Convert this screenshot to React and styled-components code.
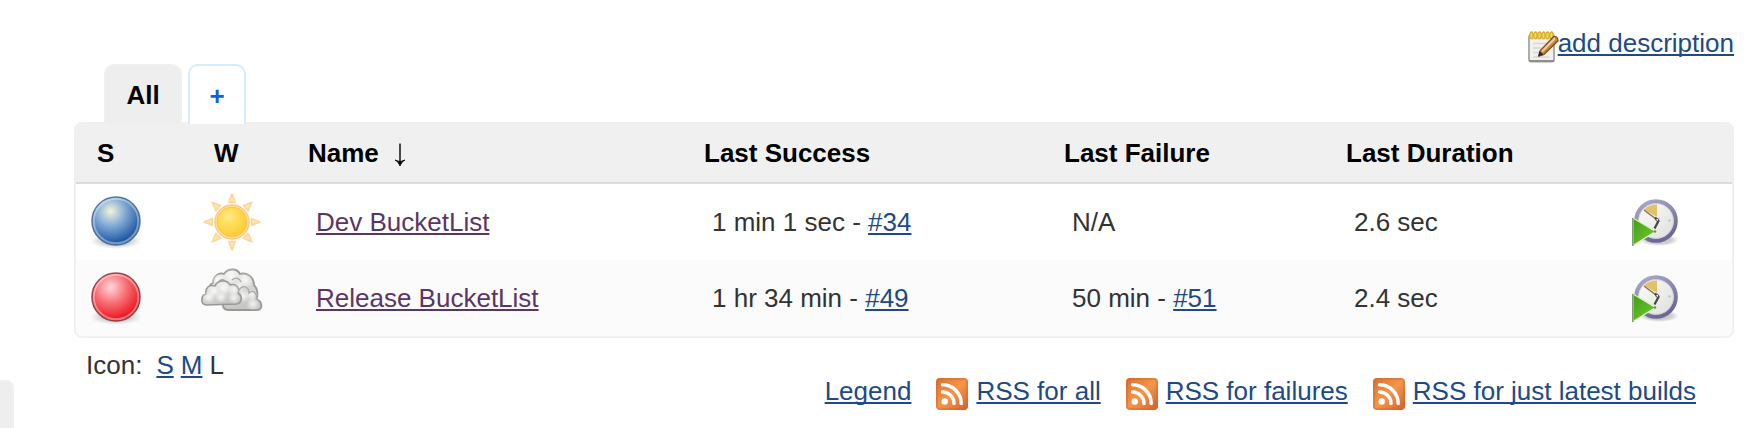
import React from 'react';
import styled, { createGlobalStyle } from 'styled-components';

const GlobalStyle = createGlobalStyle`
  *, *::before, *::after { box-sizing: border-box; }
  body {
    margin: 0;
    background: #fff;
    color: #333;
    font: 26px/30px "Liberation Sans", Helvetica, Arial, sans-serif;
    overflow: hidden;
  }
  svg { display: block; flex: none; }
`;

const Page = styled.div`
  display: flex;
  height: 428px;
  background: #fff;
`;

const SidePanel = styled.aside`
  width: 14px;
  height: 60px;
  margin-top: 380px;
  flex: none;
  background: #eee;
  border: 2px solid #f0f0f0;
  border-left: 0;
  border-top-right-radius: 8px;
`;

const Main = styled.main`
  flex: 1;
  display: flex;
  flex-direction: column;
  padding: 28px 20px 0 60px;
`;

const Link = styled.a`
  color: ${(p) => (p.$visited ? '#5c3566' : '#204a87')};
  text-decoration: underline;
  text-decoration-thickness: 2px;
  text-underline-offset: 2px;
  text-decoration-skip-ink: none;
  white-space: nowrap;
`;

const Description = styled.div`
  display: flex;
  justify-content: flex-end;
  height: 36px;
`;

const DescriptionIcon = styled.span`
  padding-top: 3px;
  margin-right: -1px;
`;

const TabBar = styled.nav`
  display: flex;
  gap: 6px;
  height: 58px;
  padding-left: 30px;
`;

const Tab = styled.div`
  width: ${(p) => (p.$active ? 78 : 58)}px;
  height: 60px;
  position: relative;
  z-index: 1;
  padding-top: ${(p) => (p.$active ? 14 : 15)}px;
  text-align: center;
  font-weight: bold;
  color: ${(p) => (p.$active ? '#000' : '#1161d6')};
  background: ${(p) => (p.$active ? '#eee' : '#fff')};
  border: 2px solid ${(p) => (p.$active ? '#f0f0f0' : '#d5ecff')};
  border-bottom: 0;
  border-radius: 10px 10px 0 0;
`;

const Jobs = styled.section`
  height: 216px;
  border: 2px solid #f0f0f0;
  border-radius: 8px;
  overflow: hidden;
`;

const Row = styled.div`
  display: grid;
  grid-template-columns: 116px 116px 396px 360px 282px 279px 1fr;
  align-items: center;
  height: 76px;
  background: ${(p) => (p.$alt ? '#fbfbfb' : '#fff')};
`;

const HeadRow = styled(Row)`
  height: 60px;
  background: #f0f0f0;
  border-bottom: 2px solid #dcdcdc;
  color: #000;
  font-weight: bold;
`;

const HeadCell = styled.div`
  display: flex;
  gap: 15px;
  padding-left: ${(p) => p.$inset ?? 0}px;
  white-space: nowrap;
`;

const Cell = styled.div`
  padding-left: ${(p) => p.$inset ?? 8}px;
  white-space: pre;
`;

const Footer = styled.footer`
  display: flex;
  justify-content: space-between;
  padding: 12px 38px 0 12px;
`;

const IconSizes = styled.div`
  display: flex;
  gap: 7px;
`;

const SizeLabel = styled.span`
  margin-right: 7px;
`;

const Feeds = styled.div`
  display: flex;
  gap: 25px;
  padding-top: 26px;
`;

const Feed = styled.div`
  display: flex;
  gap: 8px;
`;

const FeedIcon = styled.span`
  padding-top: 2px;
`;

function Ball({ id, light, mid, dark, rim }) {
  return (
    <svg width="52" height="56" viewBox="0 0 52 56">
      <defs>
        <radialGradient id={id} cx="39%" cy="30%" r="65%">
          <stop offset="0" stopColor={light} />
          <stop offset=".5" stopColor={mid} />
          <stop offset="1" stopColor={dark} />
        </radialGradient>
        <radialGradient id={id + 'Shade'}>
          <stop offset=".5" stopColor="#aaa" stopOpacity=".6" />
          <stop offset="1" stopColor="#bbb" stopOpacity="0" />
        </radialGradient>
      </defs>
      <ellipse cx="26" cy="47" rx="26" ry="8" fill={`url(#${id}Shade)`} />
      <circle cx="26" cy="27" r="24" fill={`url(#${id})`} stroke={rim} strokeOpacity=".85" strokeWidth="1.6" />
      <circle cx="26" cy="27" r="22.3" fill="none" stroke="#fff" strokeOpacity=".38" strokeWidth="2" />
    </svg>
  );
}

function Sun() {
  return (
    <svg width="60" height="60" viewBox="0 0 60 60">
      <defs>
        <radialGradient id="sunCore" cx="38%" cy="32%" r="70%">
          <stop offset="0" stopColor="#ffe98c" />
          <stop offset=".45" stopColor="#ffdc55" />
          <stop offset="1" stopColor="#fccb35" />
        </radialGradient>
      </defs>
      {[0, 45, 90, 135, 180, 225, 270, 315].map((a) => (
        <path key={a} d="M26.6 10.5 L30 2 L33.4 10.5 Z" transform={`rotate(${a} 30 30)`}
          fill="#ffe6a4" stroke="#fbd7a0" strokeWidth="1.6" strokeLinejoin="round" />
      ))}
      <circle cx="30" cy="30" r="17" fill="#ffe48c" stroke="#fbcb84" strokeWidth="1.5" />
      <circle cx="30" cy="30" r="14.7" fill="url(#sunCore)" stroke="#fbc45a" strokeWidth="1.1" />
    </svg>
  );
}

const BACK_CLOUD = 'M10 27 C7 22 8 16 12 15 C12 8 18 4 23 6 C27 0 36 0 39 6 C46 4 53 9 53 17 C57 21 57 28 55.5 31 C62 34 62 42 56 42 L28 42 C22 42 21 38 23 34 Z';
const FRONT_CLOUD = 'M5 37 C-1 36 0 27 5 26 C4 20 8 16 14 18 C16 12 26 11 29 17 C35 15 39 20 37 25 C42 28 41 35 36 36 Z';

function Clouds() {
  return (
    <svg width="62" height="46" viewBox="0 0 62 46">
      <defs>
        <linearGradient id="cloudFill" x1="0" y1="0" x2=".4" y2="1">
          <stop offset="0" stopColor="#f2f2f0" />
          <stop offset="1" stopColor="#c6c6c3" />
        </linearGradient>
        <radialGradient id="puff">
          <stop offset="0" stopColor="#fff" stopOpacity=".8" />
          <stop offset="1" stopColor="#fff" stopOpacity="0" />
        </radialGradient>
      </defs>
      <path d={BACK_CLOUD} fill="url(#cloudFill)" stroke="#989894" strokeWidth="1.8" />
      <g fill="url(#puff)">
        <circle cx="17" cy="12" r="7" /><circle cx="30" cy="8" r="8" />
        <circle cx="44" cy="12" r="8" /><circle cx="37" cy="19" r="6" />
        <circle cx="42" cy="28" r="7" /><circle cx="51" cy="27" r="6" /><circle cx="52" cy="36" r="7" />
      </g>
      <path d="M38 22 C42 16 48 19 48 25 C52 21 56 25 55.5 31 M31 12 C35 8 39 11 40 14 M17 16 C18 11 22 11 24 13"
        fill="none" stroke="#a9a9a5" strokeWidth="1.3" />
      <path d={FRONT_CLOUD} fill="url(#cloudFill)" stroke="#989894" strokeWidth="1.6" />
      <g fill="url(#puff)">
        <circle cx="8" cy="29" r="6.5" /><circle cx="13" cy="23" r="6" />
        <circle cx="23" cy="20" r="7" /><circle cx="33" cy="22" r="6" />
        <circle cx="20" cy="29" r="6" /><circle cx="33" cy="30" r="6" />
      </g>
    </svg>
  );
}

function BuildClock({ id }) {
  return (
    <svg width="48" height="50" viewBox="0 0 48 50">
      <defs>
        <linearGradient id={id + 'Rim'} x1="0" y1="0" x2=".5" y2="1">
          <stop offset="0" stopColor="#acacca" />
          <stop offset="1" stopColor="#6d6994" />
        </linearGradient>
        <linearGradient id={id + 'Face'} x1="0" y1="0" x2="1" y2="1">
          <stop offset="0" stopColor="#fff" />
          <stop offset="1" stopColor="#dcdcda" />
        </linearGradient>
        <linearGradient id={id + 'Play'} x1="0" y1="0" x2="1" y2="1">
          <stop offset="0" stopColor="#459b16" />
          <stop offset="1" stopColor="#71cd30" />
        </linearGradient>
        <radialGradient id={id + 'Shade'}>
          <stop offset=".6" stopColor="#ccc" />
          <stop offset="1" stopColor="#ccc" stopOpacity="0" />
        </radialGradient>
      </defs>
      <ellipse cx="27" cy="43" rx="20" ry="6" fill={`url(#${id}Shade)`} />
      <circle cx="24" cy="24" r="19.7" fill={`url(#${id}Face)`} stroke={`url(#${id}Rim)`} strokeWidth="4.2" />
      <circle cx="24" cy="24" r="17.4" fill="none" stroke="#cfcfdf" strokeWidth="1" />
      <circle cx="37.5" cy="23.5" r="1.3" fill="#c4c4c4" />
      <path d="M25 20 L12 12.5 Q17 7.5 25 7.5 Z" fill="#e3c06a" />
      <path d="M12 13 L24 22" stroke="#8a7343" strokeWidth="1.5" />
      <path d="M23 20.5 L26.5 24 L22.5 31.5" fill="none" stroke="#444" strokeWidth="2.2" />
      <circle cx="25.3" cy="22.8" r="1.4" fill="#fff" stroke="#444" />
      <path d="M1 21 L23.5 34.5 L1 48.5 Z" fill={`url(#${id}Play)`} stroke="#d9eec9" strokeWidth="1.3" />
      <path d="M.75 21 V49" stroke="#7d9f6b" strokeWidth="1.5" />
      <circle cx="23" cy="34.5" r="1.3" fill="#6f8d5d" />
    </svg>
  );
}

function Notepad() {
  return (
    <svg width="32" height="32" viewBox="0 0 32 32">
      <defs>
        <linearGradient id="pencil" x1="0" y1="0" x2="1" y2="1">
          <stop offset=".2" stopColor="#efc68a" />
          <stop offset=".8" stopColor="#8e5516" />
        </linearGradient>
      </defs>
      <rect x="2" y="4" width="25" height="26.5" rx="2" fill="#f0f0ee" stroke="#a5a5a2" strokeWidth="1.8" />
      <path d="M6 12.5H22M6 17H20M6 21.5H17M6 26H22" stroke="#d6d6d4" strokeWidth="1.5" />
      <path d="M2 30H27" stroke="#8a8a87" strokeWidth="1.8" />
      {[4.5, 8.5, 12.5, 16.5, 20.5, 24.5].map((x) => (
        <ellipse key={x} cx={x} cy="4.4" rx="1.7" ry="3.4" fill="#f0d864" stroke="#d3ae34" strokeWidth="1.3" />
      ))}
      <path d="M13 20 L26.5 5.5 Q31 5 31 10 L17 23.5 L12 25 Z" fill="url(#pencil)" stroke="#80521c" strokeWidth="1.3" />
      <path d="M15 20.5 L28 7.5" stroke="#f1cd96" strokeWidth="1.8" />
      <path d="M11 25.5 L12.5 20 L16.5 23.5 Z" fill="#37291d" />
    </svg>
  );
}

function Rss({ id }) {
  return (
    <svg width="32" height="32" viewBox="0 0 32 32">
      <defs>
        <linearGradient id={id} x1="0" y1="0" x2="1" y2="1">
          <stop offset="0" stopColor="#dd6d2c" />
          <stop offset=".5" stopColor="#f3964a" />
          <stop offset="1" stopColor="#d75c28" />
        </linearGradient>
      </defs>
      <rect width="32" height="32" rx="4" fill={`url(#${id})`} />
      <rect x="1" y="1" width="30" height="30" rx="3" fill="none" stroke="#d7682d" strokeOpacity=".55" strokeWidth="1.5" />
      <circle cx="8.7" cy="23.5" r="3.2" fill="#fff" />
      <path d="M6.5 14 A11.5 11.5 0 0 1 18 25.5 M6.5 6.8 A18.7 18.7 0 0 1 25.2 25.5"
        fill="none" stroke="#fff" strokeWidth="3.5" strokeLinecap="round" />
    </svg>
  );
}

function SortArrow() {
  return (
    <svg width="12" height="30" viewBox="0 0 12 30">
      <path d="M6 5.5V26" stroke="#000" strokeWidth="1.4" />
      <path d="M1 22 Q4.5 23.5 6 28 Q7.5 23.5 11 22 L6 23.7 Z" fill="#000" stroke="#000" strokeWidth=".8" />
    </svg>
  );
}

const jobs = [
  {
    name: 'Dev BucketList',
    ball: { light: '#f1f4dc', mid: '#7ba6d3', dark: '#2159a4', rim: '#3f679b' },
    Weather: Sun,
    success: ['1 min 1 sec', '#34'],
    failure: ['N/A'],
    duration: '2.6 sec',
  },
  {
    name: 'Release BucketList',
    ball: { light: '#ffd8d8', mid: '#f77177', dark: '#ed1c24', rim: '#8d3036' },
    Weather: Clouds,
    success: ['1 hr 34 min', '#49'],
    failure: ['50 min', '#51'],
    duration: '2.4 sec',
  },
];

const WeatherSlot = styled.div`
  padding-left: ${(p) => (p.$raised ? 9 : 10)}px;
  padding-bottom: ${(p) => (p.$raised ? 14 : 0)}px;
`;

const BuildRef = ({ value: [age, build] }) => (
  <Cell>
    {age}
    {build && <> - <Link href="#">{build}</Link></>}
  </Cell>
);

const feeds = ['RSS for all', 'RSS for failures', 'RSS for just latest builds'];

export default function App() {
  return (
    <Page>
      <GlobalStyle />
      <SidePanel />
      <Main>
        <Description>
          <DescriptionIcon><Notepad /></DescriptionIcon>
          <Link href="#">add description</Link>
        </Description>
        <TabBar>
          <Tab $active>All</Tab>
          <Tab>+</Tab>
        </TabBar>
        <Jobs>
          <HeadRow>
            <HeadCell $inset={21}>S</HeadCell>
            <HeadCell $inset={22}>W</HeadCell>
            <HeadCell>Name <SortArrow /></HeadCell>
            <HeadCell>Last Success</HeadCell>
            <HeadCell>Last Failure</HeadCell>
            <HeadCell>Last Duration</HeadCell>
            <HeadCell />
          </HeadRow>
          {jobs.map((job, i) => (
            <Row key={job.name} $alt={i % 2 === 1}>
              <Cell $inset={14}><Ball id={`ball${i}`} {...job.ball} /></Cell>
              <WeatherSlot $raised={i === 1}><job.Weather /></WeatherSlot>
              <Cell><Link href="#" $visited>{job.name}</Link></Cell>
              <BuildRef value={job.success} />
              <BuildRef value={job.failure} />
              <Cell>{job.duration}</Cell>
              <Cell $inset={7}><BuildClock id={`clock${i}`} /></Cell>
            </Row>
          ))}
        </Jobs>
        <Footer>
          <IconSizes>
            <SizeLabel>Icon:</SizeLabel>
            <Link href="#">S</Link>
            <Link href="#">M</Link>
            <span>L</span>
          </IconSizes>
          <Feeds>
            <Link href="#">Legend</Link>
            {feeds.map((feed, i) => (
              <Feed key={feed}>
                <FeedIcon><Rss id={`rss${i}`} /></FeedIcon>
                <Link href="#">{feed}</Link>
              </Feed>
            ))}
          </Feeds>
        </Footer>
      </Main>
    </Page>
  );
}
